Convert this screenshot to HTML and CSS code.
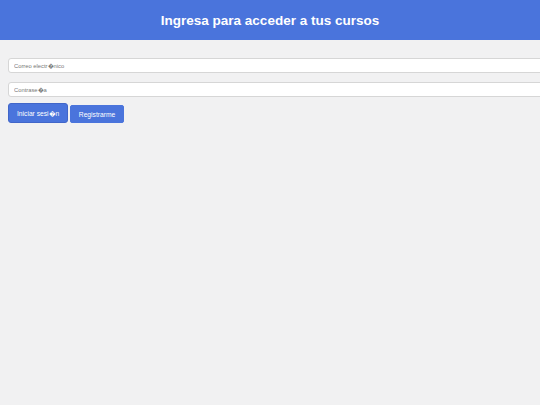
FILE: index.html
```html
<!DOCTYPE html>
<html lang="es">
<head>
<meta charset="utf-8">
<title>Ingresa</title>
<link rel="stylesheet" href="styles.css">
</head>
<body>
<header class="topbar">
  <h1 class="title">Ingresa para acceder a tus cursos</h1>
</header>
<main class="content">
  <form class="login">
    <input class="field" type="email" placeholder="Correo electr&#xFFFD;nico">
    <input class="field" type="password" placeholder="Contrase&#xFFFD;a">
    <div class="actions">
      <button type="button" class="btn btn-active">Iniciar sesi&#xFFFD;n</button>
      <button type="button" class="btn">Registrarme</button>
    </div>
  </form>
</main>
</body>
</html>
```

FILE: styles.css
```css
html, body {
  margin: 0;
  padding: 0;
  background: #f1f1f2;
  font-family: "Liberation Sans", Arial, sans-serif;
}

.topbar {
  background: #4a74dc;
  height: 40px;
  display: flex;
  align-items: center;
  justify-content: center;
}

.title {
  margin: 0;
  color: #ffffff;
  font-size: 13.5px;
  font-weight: bold;
}

.content {
  padding: 18px 8px 0 8px;
}

.login {
  display: flex;
  flex-direction: column;
  align-items: flex-start;
  gap: 9px;
}

.field {
  width: 100%;
  box-sizing: content-box;
  margin: 0;
  padding: 0 5px;
  height: 13px;
  border: 1px solid #d6d6d6;
  border-radius: 3px;
  background: #ffffff;
  font-family: "Liberation Sans", Arial, sans-serif;
  font-size: 5.8px;
  color: #555;
  outline: none;
}

.field::placeholder {
  color: #777;
}

.actions {
  display: flex;
  align-items: flex-end;
  gap: 2px;
  margin-top: -3px;
}

.btn {
  margin: 0;
  height: 18px;
  padding: 0 7.5px;
  border: 1px solid #4a74dc;
  border-radius: 2px;
  background: #4a74dc;
  color: #ffffff;
  font-family: "Liberation Sans", Arial, sans-serif;
  font-size: 6.7px;
}

.btn-active {
  height: 20px;
  padding: 0 8px;
  border-color: #4166c9;
  border-radius: 3px;
}
```
